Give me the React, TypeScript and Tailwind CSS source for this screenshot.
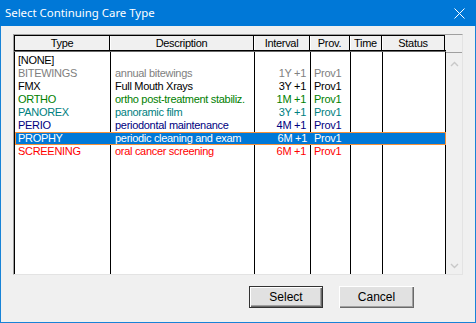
import React from 'react';

type Row = { type: string; desc: string; interval: string; prov: string; color: string; selected?: boolean };

const ROWS: Row[] = [
  { type: '[NONE]', desc: '', interval: '', prov: '', color: 'text-black' },
  { type: 'BITEWINGS', desc: 'annual bitewings', interval: '1Y +1', prov: 'Prov1', color: 'text-[#808080]' },
  { type: 'FMX', desc: 'Full Mouth Xrays', interval: '3Y +1', prov: 'Prov1', color: 'text-black' },
  { type: 'ORTHO', desc: 'ortho post-treatment stabiliz.', interval: '1M +1', prov: 'Prov1', color: 'text-[#008000]' },
  { type: 'PANOREX', desc: 'panoramic film', interval: '3Y +1', prov: 'Prov1', color: 'text-[#008080]' },
  { type: 'PERIO', desc: 'periodontal maintenance', interval: '4M +1', prov: 'Prov1', color: 'text-[#000080]' },
  { type: 'PROPHY', desc: 'periodic cleaning and exam', interval: '6M +1', prov: 'Prov1', color: 'text-white', selected: true },
  { type: 'SCREENING', desc: 'oral cancer screening', interval: '6M +1', prov: 'Prov1', color: 'text-[#ff0000]' },
];

const COLS = 'grid grid-cols-[96px_144px_56px_40px_32px_63px]';

function HeadCell({ label, first }: { label: string; first?: boolean }) {
  return (
    <div className={`h-[15px] bg-[#f0f0f0] border-t border-r border-black flex items-center justify-center leading-none ${first ? 'border-l' : 'shadow-[inset_1px_0_0_#ffffff]'}`}>
      {label}
    </div>
  );
}

function DataRow({ r }: { r: Row }) {
  const sep = r.selected ? '' : 'border-r border-black';
  return (
    <div className={`${COLS} h-[13px] leading-[13px] whitespace-nowrap ${r.color} ${r.selected ? 'bg-[#0078d7] outline outline-1 -outline-offset-1 outline-[#f5913a]' : ''}`}>
      <div className={`pl-[3px] overflow-hidden ${sep}`}>{r.type}</div>
      <div className={`pl-[4px] overflow-hidden ${sep}`}>{r.desc}</div>
      <div className={`pr-[4px] text-right overflow-hidden ${sep}`}>{r.interval}</div>
      <div className={`pl-[3px] overflow-hidden ${sep}`}>{r.prov}</div>
      <div className={sep} />
      <div className={r.selected ? '' : 'border-r border-black'} />
    </div>
  );
}

function Chevron({ down }: { down?: boolean }) {
  return (
    <svg width="9" height="6" viewBox="0 0 9 6" className={down ? 'rotate-180' : ''}>
      <path d="M1 5 L4.5 1.5 L8 5" fill="none" stroke="#c8c8c8" strokeWidth="1.4" />
    </svg>
  );
}

export default function App() {
  return (
    <div className="w-[476px] h-[323px] flex flex-col bg-[#f0f0f0] border-x border-b border-[#1883d7] font-['Liberation_Sans',Arial,sans-serif] text-[11px] tracking-[-0.3px] text-black select-none">
      <div className="h-[26px] -mx-px bg-[#0078d7] flex items-center pl-[5px] text-white text-[11.4px] tracking-normal font-['Noto_Sans',sans-serif]">
        <span className="flex-1">Select Continuing Care Type</span>
        <svg width="11" height="11" viewBox="0 0 11 11" className="mr-[11px]">
          <path d="M0.5 0.5 L10.5 10.5 M10.5 0.5 L0.5 10.5" stroke="#ffffff" strokeWidth="1" />
        </svg>
      </div>

      <div className="pl-[12px] pt-[8px]">
        <div className="w-[450px] h-[241px] border-l border-t border-[#a0a0a0] border-r-[#e3e3e3] border-b-[#e3e3e3] border-r border-b flex">
          <div className="w-[432px] flex flex-col">
            <div className={COLS}>
              <HeadCell label="Type" first />
              <HeadCell label="Description" />
              <HeadCell label="Interval" />
              <HeadCell label="Prov." />
              <HeadCell label="Time" />
              <HeadCell label="Status" />
            </div>
            <div className="h-[2px] bg-[#696969] border-t border-black" />
            <div className="flex-1 flex flex-col bg-white border-l border-black w-[432px]">
              <div className={`${COLS} h-[2px]`}>
                <div className="border-r border-black" /><div className="border-r border-black" /><div className="border-r border-black" />
                <div className="border-r border-black" /><div className="border-r border-black" /><div className="border-r border-black" />
              </div>
              {ROWS.map(r => <DataRow key={r.type} r={r} />)}
              <div className={`${COLS} flex-1`}>
                <div className="border-r border-black" /><div className="border-r border-black" /><div className="border-r border-black" />
                <div className="border-r border-black" /><div className="border-r border-black" /><div className="border-r border-black" />
              </div>
            </div>
          </div>
          <div className="flex-1 flex flex-col mt-[17px] border-t border-[#a0a0a0] bg-[#f0f0f0] items-center justify-between pt-[8px] pb-[5px]">
            <Chevron />
            <Chevron down />
          </div>
        </div>
      </div>

      <div className="flex pl-[248px] pt-[11px] gap-[16px] text-[12px] tracking-normal">
        <button className="w-[74px] h-[22px] border border-[#333333] bg-[#e1e1e1] shadow-[inset_1px_1px_0_#ffffff,inset_-1px_-1px_0_#696969,inset_-2px_-2px_0_#a0a0a0] flex items-center justify-center">
          Select
        </button>
        <button className="w-[75px] h-[22px] bg-[#e1e1e1] shadow-[inset_1px_1px_0_#ffffff,inset_-1px_-1px_0_#696969,inset_-2px_-2px_0_#a0a0a0] flex items-center justify-center">
          Cancel
        </button>
      </div>
    </div>
  );
}
